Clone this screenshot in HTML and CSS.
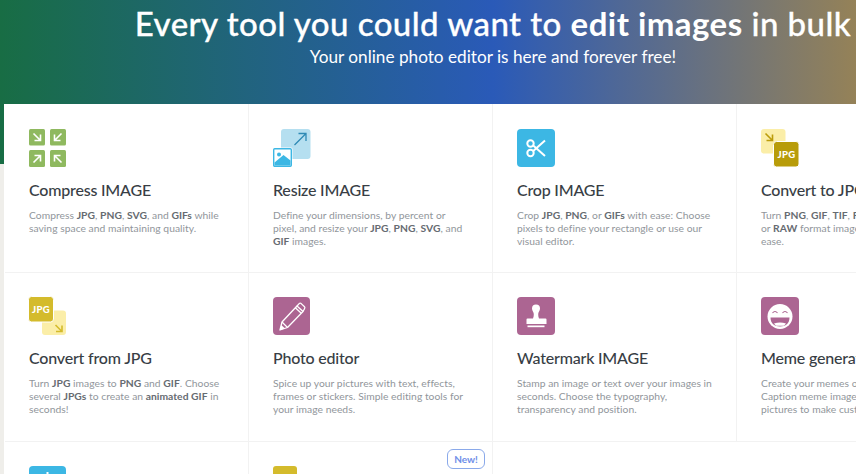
FILE: index.html
```html
<!DOCTYPE html>
<html lang="en">
<head>
<meta charset="utf-8">
<title>Every tool you could want to edit images in bulk</title>
<link rel="stylesheet" href="styles.css">
</head>
<body>
<div class="page">
  <header class="hero">
    <h1 class="hero-title">Every tool you could want to <strong>edit images</strong> in bulk</h1>
    <p class="hero-sub">Your online photo editor is here and forever free!</p>
  </header>
  <main class="tools">
    <a class="tool">
      <svg class="icon" viewBox="0 0 38 38">
        <rect x="0" y="0" width="16" height="16.5" rx="1.5" fill="#8fb95f"/>
        <rect x="21" y="0" width="16" height="16.5" rx="1.5" fill="#8fb95f"/>
        <rect x="0" y="21" width="16" height="17" rx="1.5" fill="#8fb95f"/>
        <rect x="21" y="21" width="16" height="17" rx="1.5" fill="#8fb95f"/>
        <g fill="none" stroke="#fff" stroke-width="1.6">
          <path d="M4.5 4.5l6.5 6.5M11.5 5.5v6h-6"/>
          <path d="M32.5 4.5l-6.5 6.5M25.5 5.5v6h6"/>
          <path d="M4.500 33.500l6.500-6.500M5.500 26.500h6v6"/>
          <path d="M32.500 33.500l-6.500-6.500M31.500 26.500h-6v6"/>
        </g>
      </svg>
      <h2 class="tool-title">Compress IMAGE</h2>
      <p class="tool-text">Compress <b>JPG</b>, <b>PNG</b>, <b>SVG</b>, and <b>GIFs</b> while<br>saving space and maintaining quality.</p>
    </a>
    <a class="tool">
      <svg class="icon" viewBox="0 0 38 38">
        <rect x="8" y="0" width="29.500" height="30" rx="3" fill="#b5dff0"/>
        <path d="M21.500 16L33 4.500M25.500 4.500H33V12" fill="none" stroke="#2f8ab5" stroke-width="1.300"/>
        <rect x="-.5" y="18.500" width="20" height="20" rx="1.500" fill="#fff"/>
        <rect x=".7" y="19.700" width="17.600" height="17.600" rx="1" fill="#fff" stroke="#3cb7e4" stroke-width="1.400"/>
        <circle cx="6" cy="25.500" r="2" fill="#3cb7e4"/>
        <path d="M1.500 36.500v-3l9-7.500 7 5.500v5z" fill="#3cb7e4"/>
      </svg>
      <h2 class="tool-title">Resize IMAGE</h2>
      <p class="tool-text">Define your dimensions, by percent or<br>pixel, and resize your <b>JPG</b>, <b>PNG</b>, <b>SVG</b>, and<br><b>GIF</b> images.</p>
    </a>
    <a class="tool">
      <svg class="icon" viewBox="0 0 38 38">
        <rect width="38" height="38" rx="4" fill="#3cb7e4"/>
        <g fill="none" stroke="#fff" stroke-width="2">
          <circle cx="13.500" cy="14.500" r="3.200"/>
          <circle cx="13.500" cy="24" r="3.200"/>
          <path d="M16.200 16.500L28 27M16.200 22L28 11.500"/>
        </g>
      </svg>
      <h2 class="tool-title">Crop IMAGE</h2>
      <p class="tool-text">Crop <b>JPG</b>, <b>PNG</b>, or <b>GIFs</b> with ease: Choose<br>pixels to define your rectangle or use our<br>visual editor.</p>
    </a>
    <a class="tool">
      <svg class="icon" viewBox="0 0 38 38">
        <rect width="24.500" height="24.500" rx="3" fill="#fbeea8"/>
        <path d="M4.500 4.500L11 11M11.500 5.500V11.500H5.500" fill="none" stroke="#bb9c0a" stroke-width="1.600"/>
        <rect x="12.500" y="12.500" width="25.500" height="25.500" rx="3" fill="#b89c0a" stroke="#fff"/>
        <text class="icon-label" x="25.500" y="28.800">JPG</text>
      </svg>
      <h2 class="tool-title">Convert to JPG</h2>
      <p class="tool-text">Turn <b>PNG</b>, <b>GIF</b>, <b>TIF</b>, <b>PSD</b>, <b>SVG</b>, <b>WEBP</b>, <b>HEIC</b>,<br>or <b>RAW</b> format images to <b>JPG</b> in bulk with<br>ease.</p>
    </a>
    <a class="tool">
      <svg class="icon" viewBox="0 0 38 38">
        <rect x="13" y="13.500" width="24" height="24.500" rx="3" fill="#fbeea8"/>
        <path d="M26.500 28L32.500 34M33 28.500V34.500H27" fill="none" stroke="#d4bb2c" stroke-width="1.600"/>
        <rect x="-.5" y="-.5" width="25" height="25.500" rx="3" fill="#d4bb2c" stroke="#fff"/>
        <text class="icon-label" x="12" y="15.800">JPG</text>
      </svg>
      <h2 class="tool-title">Convert from JPG</h2>
      <p class="tool-text">Turn <b>JPG</b> images to <b>PNG</b> and <b>GIF</b>. Choose<br>several <b>JPGs</b> to create an <b>animated GIF</b> in<br>seconds!</p>
    </a>
    <a class="tool">
      <svg class="icon" viewBox="0 0 38 38">
        <rect width="37" height="38" rx="4" fill="#ac6592"/>
        <g fill="none" stroke="#fff" stroke-width="1.300" stroke-linejoin="round">
          <path d="M9 25L24 9l6 5.500L14.500 30.500l-7.500 2.500z"/>
          <path d="M24 9l2.200-2.400q1-.8 2 0l3.300 3.100q.8 1 0 2L30 14.500M22.300 10.800l6 5.500M9 25l5.500 5.500"/>
        </g>
        <path d="M7 33l1.300-5 3.700 3.600z" fill="#fff"/>
      </svg>
      <h2 class="tool-title">Photo editor</h2>
      <p class="tool-text">Spice up your pictures with text, effects,<br>frames or stickers. Simple editing tools for<br>your image needs.</p>
    </a>
    <a class="tool">
      <svg class="icon" viewBox="0 0 38 38">
        <rect width="38" height="38" rx="4" fill="#ac6592"/>
        <path d="M19 7.500a4 4 0 0 1 4 4c0 2.200-1.600 3.200-1.800 5.500-.1 1.500.2 3 .8 4.500h6.500q1 0 1 1V27H9.500v-4.500q0-1 1-1H16c.6-1.500.9-3 .8-4.500-.2-2.300-1.800-3.300-1.800-5.500a4 4 0 0 1 4-4z" fill="#fff"/>
        <rect x="10.500" y="28.500" width="17" height="1.700" fill="#fff"/>
      </svg>
      <h2 class="tool-title">Watermark IMAGE</h2>
      <p class="tool-text">Stamp an image or text over your images in<br>seconds. Choose the typography,<br>transparency and position.</p>
    </a>
    <a class="tool">
      <svg class="icon" viewBox="0 0 38 38">
        <rect width="38" height="38" rx="4" fill="#ac6592"/>
        <circle cx="19" cy="19.500" r="12.500" fill="#fff"/>
        <path d="M9.500 20.500h19c0 6-4 9-9.500 9s-9.500-3-9.500-9z" fill="#ac6592"/>
        <path d="M13 26.500q6-2 12 0l-2 2.200h-8z" fill="#fff"/>
        <path d="M11.500 16q2.500-3 5 0M21.500 16q2.500-3 5 0" fill="none" stroke="#ac6592" stroke-width="1.100"/>
      </svg>
      <h2 class="tool-title">Meme generator</h2>
      <p class="tool-text">Create your memes online with ease.<br>Caption meme images or upload your<br>pictures to make custom memes.</p>
    </a>
    <a class="tool">
      <svg class="icon" viewBox="0 0 38 38">
        <rect width="37" height="38" rx="4" fill="#3cb7e4"/>
        <rect x="17.500" y="6" width="2" height="8" fill="#fff"/>
      </svg>
    </a>
    <a class="tool">
      <span class="badge">New!</span>
      <svg class="icon" viewBox="0 0 38 38">
        <rect width="24" height="38" rx="3" fill="#d4bb2c"/>
      </svg>
    </a>
  </main>
</div>
</body>
</html>
```
FILE: styles.css
```css
html, body {
  margin: 0;
  height: 474px;
  overflow: hidden;
  background: #efeeea;
}
.page {
  width: 986px;
  font-family: "Lato", "Open Sans", sans-serif;
}
.hero {
  height: 164px;
  box-sizing: border-box;
  padding-top: 3px;
  text-align: center;
  color: #fff;
  background: linear-gradient(90deg, #186d44 0%, #2a5ab8 50%, #bb9035 100%);
}
.hero-title {
  margin: 0;
  font-size: 33px;
  line-height: 40px;
  font-weight: 500;
  letter-spacing: .45px;
  -webkit-text-stroke: .3px #fff;
}
.hero-title strong {
  font-weight: 700;
  -webkit-text-stroke: 0;
}
.hero-sub {
  margin: 2px 0 0;
  font-size: 17.200px;
  line-height: 24px;
  font-weight: 400;
}
.tools {
  display: grid;
  grid-template-columns: repeat(4, 244px);
  grid-template-rows: 168.5px 169px 168px;
  margin: -60px 0 0 4px;
  padding-left: 1px;
  background: #fff;
}
.tool {
  position: relative;
  box-sizing: border-box;
  padding: 24px 20px 0 24px;
  border-right: 1px solid #f2f2f2;
  border-bottom: 1px solid #f2f2f2;
}
.tool:nth-child(-n+4) {
  padding-top: 24.500px;
}
.tool:nth-child(4n) {
  border-right-color: transparent;
}
.icon {
  display: block;
  width: 38px;
  height: 38px;
  overflow: visible;
}
.icon-label {
  fill: #fff;
  font-family: "Lato", sans-serif;
  font-size: 9.500px;
  font-weight: 900;
  text-anchor: middle;
  letter-spacing: .3px;
}
.tool-title {
  margin: 13px 0 0;
  font-size: 16px;
  line-height: 20px;
  font-weight: 500;
  color: #383e45;
  white-space: nowrap;
  letter-spacing: -.2px;
}
.tool-text {
  margin: 9px 0 0;
  font-size: 10.300px;
  line-height: 13.400px;
  color: #91969b;
  white-space: nowrap;
  letter-spacing: .03px;
}
.tool-text b {
  font-weight: 700;
  color: #666b71;
}
.badge {
  position: absolute;
  top: 7.500px;
  right: 7px;
  box-sizing: border-box;
  width: 38px;
  height: 20px;
  border: 1px solid #8aa9ea;
  border-radius: 6px;
  background: #fff;
  color: #6f8ee8;
  font-size: 10px;
  font-weight: 700;
  line-height: 18px;
  text-align: center;
}
```
